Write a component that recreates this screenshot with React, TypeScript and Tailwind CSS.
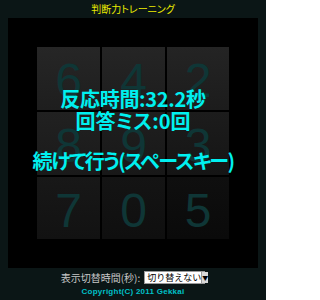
import React from "react";

const tiles = [
  { d: "6", from: "#262626", to: "#1e1e1e" },
  { d: "4", from: "#252525", to: "#1d1d1d" },
  { d: "2", from: "#242424", to: "#1c1c1c" },
  { d: "8", from: "#212121", to: "#1a1a1a" },
  { d: "9", from: "#1f1f1f", to: "#181818" },
  { d: "3", from: "#1c1c1c", to: "#151515" },
  { d: "7", from: "#181818", to: "#121212" },
  { d: "0", from: "#141414", to: "#0f0f0f" },
  { d: "5", from: "#0f0f0f", to: "#0a0a0a" },
];

export default function App() {
  return (
    <div
      className="w-[266px] h-[300px] bg-[#0b1616] flex flex-col items-center"
      style={{ fontFamily: '"Noto Sans CJK JP", "Liberation Sans", sans-serif' }}
    >
      <div className="h-[18px] flex items-center justify-center text-[10px] text-[#ecec00] leading-none [font-feature-settings:'palt']">
        判断力トレーニング
      </div>
      <div className="relative w-[250px] h-[250px] bg-black flex items-center justify-center">
        <div className="grid grid-cols-[63px_63px_62px] grid-rows-[63px_63px_62px] gap-[2px] w-[192px]">
          {tiles.map((t) => (
            <div
              key={t.d}
              className="flex items-center justify-center"
              style={{ background: `linear-gradient(to bottom, ${t.from}, ${t.to})` }}
            >
              <span
                className="mt-[5px] text-[48px] leading-none text-[#0f3636]"
                style={{ fontFamily: '"Liberation Sans", Arial, sans-serif' }}
              >
                {t.d}
              </span>
            </div>
          ))}
        </div>
        <div className="absolute inset-0 flex flex-col items-center pt-[70px] text-[#00f0f0] font-bold text-[20px] leading-[22px] whitespace-nowrap [font-feature-settings:'palt']">
          <div className="tracking-[-0.3px]">反応時間:32.2秒</div>
          <div>回答ミス:0回</div>
          <div className="mt-[18px] tracking-[-1.5px]">続けて行う(スペースキー)</div>
        </div>
      </div>
      <div className="mt-[3px] h-[13px] flex items-center gap-[4px]">
        <span className="text-[10px] leading-none text-[#c8c8c8]">表示切替時間(秒):</span>
        <div className="h-[13px] w-[61px] flex items-stretch bg-white border border-[#9a9a9a]">
          <span className="flex-1 flex items-center pl-[2px] text-[9px] leading-none text-black whitespace-nowrap">
            切り替えない
          </span>
          <span className="w-[11px] flex items-center justify-center bg-[#d8d8d8] border-l border-[#9a9a9a] text-[6px] text-black leading-none">
            ▼
          </span>
        </div>
      </div>
      <div
        className="mt-[4px] text-[8px] font-bold leading-none text-[#00c0c8] tracking-[0.25px]"
        style={{ fontFamily: '"Liberation Sans", Arial, sans-serif' }}
      >
        Copyright(C) 2011 Gekkai
      </div>
    </div>
  );
}
